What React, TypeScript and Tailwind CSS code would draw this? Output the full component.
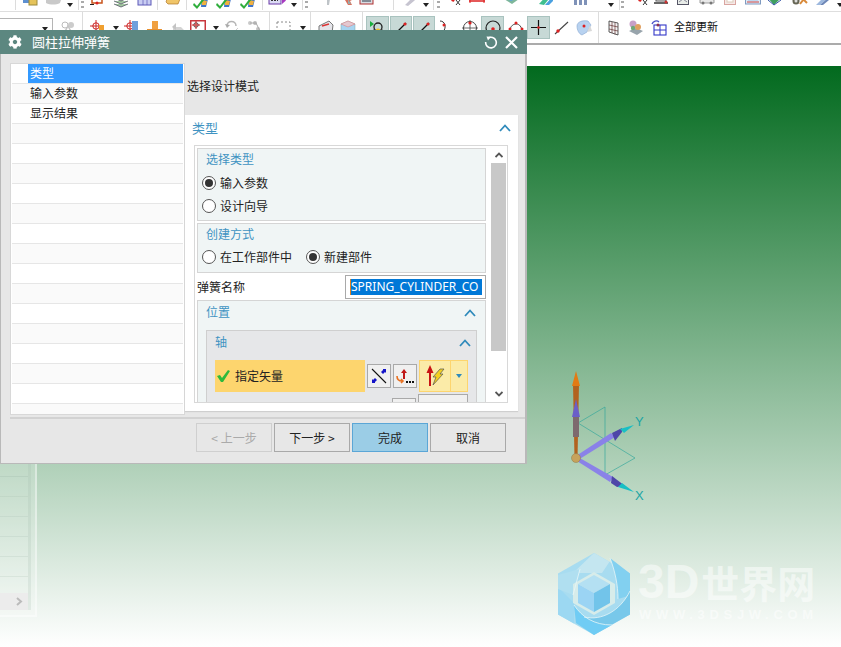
import React from "react";
import { FaCog } from "react-icons/fa";

type P = { ml: string; w?: number; children?: React.ReactNode };
const I = ({ ml, w = 16, children }: P) => (
  <svg className={"shrink-0 " + ml} width={w} height={16} viewBox={`0 0 ${w} 16`}>
    {children}
  </svg>
);
const Dd = ({ ml }: { ml: string }) => (
  <svg className={"shrink-0 " + ml} width={7} height={4} viewBox="0 0 7 4">
    <path d="M0 0h6L3 4z" fill="#222" />
  </svg>
);
const Sep = ({ ml }: { ml: string }) => <div className={"w-px self-stretch shrink-0 bg-[#dcdcdc] " + ml} />;
const Grip = ({ ml }: { ml: string }) => (
  <svg className={"shrink-0 self-start " + ml} width={3} height={11} viewBox="0 0 3 11">
    <path d="M0 1h3v2H0zM0 6h3v2H0z" fill="#aaa" />
  </svg>
);

const CheckIcon = ({ ml }: { ml: string }) => (
  <I ml={ml}>
    <path d="M9 3l6 2-2 8H8z" fill="#3e74c8" />
    <path d="M9 6l5 1-1 4H9z" fill="#f0b040" />
    <path d="M1 9l3 3 6-8 2 1-8 10-4-4z" fill="#2fae3c" />
  </I>
);
const Cross = () => (
  <g stroke="#c22" strokeWidth="1" fill="none">
    <circle cx="6" cy="6" r="3.2" />
    <path d="M6 0v12M0 6h12" />
  </g>
);
const Pt = ({ dark = false }: { dark?: boolean }) => (
  <svg width={16} height={16} viewBox="0 0 16 16">
    <path d="M3 13L13 3" stroke={dark ? "#111" : "#555"} strokeWidth="1.2" />
    <circle cx="3.5" cy="12.5" r="1.6" fill="#d22" />
    {dark && <circle cx="12" cy="4" r="1.6" fill="#d22" />}
  </svg>
);
const Toggle = ({ ml, w = 22, children }: { ml: string; w?: number; children: React.ReactNode }) => (
  <div
    className={
      "shrink-0 h-[23px] flex items-center justify-center bg-[#c7d9d6] border border-[#a9c3bf] " +
      (w === 23 ? "w-[23px] " : "w-[22px] ") +
      ml
    }
  >
    {children}
  </div>
);

const Row1 = () => (
  <div className="h-[12px] flex items-end overflow-hidden border-b border-[#dedede] pb-px bg-white">
    <Sep ml="ml-[15px]" />
    <I ml="ml-[6px]"><rect x="1" y="0" width="11" height="9" fill="#5d8fd0" /><rect x="7" y="3" width="8" height="8" fill="#e5c35a" stroke="#9b8a3c" /></I>
    <I ml="ml-[7px]" w={18}><path d="M1 6c3-6 12-7 16-3l-2 6c-4 2-10 2-14 0z" fill="#c9c9c9" /></I>
    <Dd ml="ml-[4px] mb-[3px]" />
    <Sep ml="ml-[4px]" />
    <Grip ml="ml-[2px]" />
    <I ml="ml-[6px]"><rect x="2" y="1" width="10" height="8" fill="none" stroke="#c9541c" strokeWidth="1.5" /><path d="M0 10h4v1H0zM12 2h4v1h-4z" fill="#222" /><circle cx="7" cy="9" r="1.5" fill="#d22" /></I>
    <I ml="ml-[7px]"><path d="M1 4l7-3 7 3-7 3zM1 7l7 3 7-3M1 10l7 3 7-3" fill="#a3c9a0" stroke="#556" strokeWidth=".8" /></I>
    <I ml="ml-[8px]"><rect x="1" y="1" width="13" height="10" fill="#c9cdf2" stroke="#5c59b8" /><path d="M1 5h13M6 1v10M10 1v10" stroke="#5c59b8" strokeWidth=".7" /></I>
    <Sep ml="ml-[4px]" />
    <I ml="ml-[7px]"><path d="M1 8l2-6 9-1 3 4-2 5H3z" fill="#f0c568" stroke="#b0772a" strokeWidth=".7" /></I>
    <Sep ml="ml-[5px]" />
    <CheckIcon ml="ml-[6px]" />
    <CheckIcon ml="ml-[7px]" />
    <CheckIcon ml="ml-[8px]" />
    <Sep ml="ml-[6px]" />
    <I ml="ml-[5px]" w={18}><rect x="1" y="3" width="12" height="7" fill="#dcdcf4" stroke="#6a3aa8" /><path d="M3 6h7" stroke="#333" strokeDasharray="2 1" strokeWidth="2" /><path d="M14 3l4 3.5-4 3.500z" fill="#a83ac0" /></I>
    <Dd ml="ml-[5px] mb-[3px]" />
    <Sep ml="ml-[4px]" />
    <Grip ml="ml-[2px]" />
    <I ml="ml-[12px]"><path d="M3 0h11l-4 5-1 6H7V5z" fill="#bfc4c8" /></I>
    <I ml="ml-[3px]"><path d="M2 0l7 4 5-3 1 4-4 2 2 4H9L6 6z" fill="#d8705c" /><path d="M9 5l3 5H9z" fill="#9aa" /></I>
    <I ml="ml-[4px]"><rect x="1" y="0" width="13" height="10" fill="#d8dce2" stroke="#b03030" /><path d="M3 4l9-2M3 7h9" stroke="#2c3a48" /></I>
    <Sep ml="ml-[18px]" />
    <I ml="ml-[9px]"><path d="M2 11l6-6 4-5 3 3-4 4-6 5z" fill="#c6c4d0" /><path d="M11 0l4 3-2 2-3-3z" fill="#d9935f" /></I>
    <Dd ml="ml-[4px] mb-[3px]" />
    <Sep ml="ml-[3px]" />
    <Grip ml="ml-[3px]" />
    <I ml="ml-[5px]"><path d="M1 2l8 5" stroke="#b44" strokeWidth="1.5" /><circle cx="2" cy="2" r="1.600" fill="#d22" /><circle cx="8" cy="6" r="1.600" fill="#d22" /><path d="M11 6l4 5M15 6l-4 5" stroke="#333" /></I>
    <I ml="ml-[8px]"><path d="M0 7h16" stroke="#d22" strokeWidth="1.500" /><path d="M1 5v4M15 5v4" stroke="#d22" /><path d="M2 0h12v3H2z" fill="#eee" stroke="#333" strokeWidth=".7" /></I>
    <I ml="ml-[18px]" w={17}><path d="M1 5l7-4 8 4-7 5z" fill="#7eb79b" /><path d="M4 3l4 3 4-3" stroke="#d48a4a" fill="none" /><circle cx="8" cy="5" r="2" fill="#5fa5d8" /></I>
    <I ml="ml-[18px]"><path d="M1 10L10 0h5L6 11z" fill="#3fbf8e" /><path d="M7 11l8-9v5l-4 4z" fill="#4aa0e0" /></I>
    <I ml="ml-[19px]"><path d="M1 11V4l4-4 2 3 2-3 5 4v7h-3V6H9v5H6V6H4v5z" fill="#7f92b8" /></I>
    <Dd ml="ml-[19px] mb-[3px]" />
    <Sep ml="ml-[4px]" />
    <Grip ml="ml-px" />
    <I ml="ml-[8px]"><path d="M1 2l8 5" stroke="#b44" strokeWidth="1.500" /><circle cx="2" cy="2" r="1.600" fill="#d22" /><circle cx="8" cy="6" r="1.600" fill="#d22" /><path d="M11 6l4 5M15 6l-4 5" stroke="#333" /></I>
    <I ml="ml-[5px]"><path d="M1 9h14" stroke="#333" strokeWidth="1.500" /><rect x="3" y="0" width="10" height="7" fill="#f4f4f4" stroke="#555" /><circle cx="13" cy="8" r="1.500" fill="#c33" /></I>
    <I ml="ml-[8px]" w={12}><rect x="0.500" y="0" width="11" height="10.500" fill="#e8ece8" stroke="#556" /><path d="M2 8l8-6M2 2l8 6" stroke="#889" /></I>
    <I ml="ml-[10px]"><path d="M1 9V6l4-3h6l4 3v3z" fill="#e8e8e8" stroke="#888" strokeWidth=".8" /><circle cx="4" cy="9" r="1.500" fill="#777" /><circle cx="12" cy="9" r="1.500" fill="#777" /></I>
    <I ml="ml-[9px]" w={12}><rect x=".5" y="0" width="11" height="10.500" fill="#f5e9e7" stroke="#d9a5a0" /><rect x="3" y="2" width="6" height="6" fill="#fff" stroke="#dcb" /></I>
    <I ml="ml-[9px]"><rect x=".5" y="0" width="15" height="10" fill="#dfeaf5" stroke="#7f9ac0" /><path d="M2 8h12" stroke="#c44" /><rect x="3" y="1.500" width="10" height="5" fill="#9cc3e8" /></I>
    <I ml="ml-[6px]" w={15}><path d="M1 4l6-4 7 4-7 7z" fill="#3f9f5f" /><path d="M4 3l3-2 3 2-3 3z" fill="#d8a22c" /><path d="M1 6l6 5 7-5" stroke="#3a58a8" fill="none" /></I>
    <I ml="ml-[10px]"><circle cx="4" cy="7" r="3.500" fill="#665" /><circle cx="4" cy="7" r="1.500" fill="#ddd" /><path d="M8 2l7 7M15 1L8 10" stroke="#d98a3a" strokeWidth="2" /><circle cx="13" cy="3" r="1.500" fill="#d33" /></I>
    <I ml="ml-[7px]" w={15}><path d="M1 11L11 1l3 2L5 11z" fill="#9db8de" /><path d="M5 11L14 3v3l-6 5z" fill="#6d87b8" /></I>
    <Dd ml="ml-[7px] mb-[3px]" />
  </div>
);

const Row2 = () => (
  <div className="h-[31px] flex items-center bg-white border-b-2 border-[#ababab] box-content">
    <div className="w-[53px] h-[31px] shrink-0 pt-[6px]">
      <div className="h-[25px] border-t border-r border-[#b5b5b5] flex justify-end pr-[3px] pt-[8px]">
        <Dd ml="" />
      </div>
    </div>
    <I ml="ml-[7px]"><circle cx="5" cy="5" r="3" fill="none" stroke="#bbb" /><circle cx="11" cy="5" r="3" fill="#ccc" /><path d="M3 15l5-9 5 9" fill="none" stroke="#c4c4c4" strokeWidth="1.500" /></I>
    <Sep ml="ml-[6px]" />
    <I ml="ml-[7px]"><Cross /><rect x="9" y="5" width="5" height="8" fill="#f0a030" /><rect x="3" y="11" width="12" height="4" fill="#4a7fd0" /></I>
    <Dd ml="ml-[7px]" />
    <I ml="ml-[4px]"><Cross /><rect x="8" y="1" width="6" height="10" fill="#6fa0dc" /><rect x="2" y="10" width="14" height="4" fill="#5f90d0" /></I>
    <I ml="ml-[6px]"><rect x="6" y="1" width="6" height="9" fill="#f0a040" /><rect x="1" y="9" width="15" height="5" fill="#e89030" /></I>
    <I ml="ml-[8px]"><path d="M3 7h8l3 3v4h-4v-3H3z" fill="#d4d4d4" /><path d="M6 3L2 7l4 3" fill="#c4c4c4" /></I>
    <I ml="ml-[4px]"><rect x=".75" y=".75" width="14.500" height="14.500" fill="#fff" stroke="#c8373d" strokeWidth="1.500" /><g transform="translate(2 1)"><circle cx="4" cy="4" r="2.200" fill="none" stroke="#444" /><path d="M4 0v8M0 4h8" stroke="#c22" /></g><rect x="8" y="10" width="6" height="4" fill="#f0a030" /></I>
    <Dd ml="ml-[7px]" />
    <I ml="ml-[4px]"><path d="M3 6c0-6 9-6 9 0" fill="none" stroke="#b5b5b5" strokeWidth="1.500" /><path d="M1 4l2 4 3-3z" fill="#aaa" /><path d="M9 13l5-5" stroke="#ccc" /></I>
    <I ml="ml-[7px]"><circle cx="3" cy="3" r="2" fill="#c9c9c9" /><circle cx="8" cy="3" r="2" fill="#bbb" /><circle cx="11" cy="9" r="2" fill="#c4c4c4" /><path d="M3 3h6l3 6 2 4" stroke="#aaa" fill="none" /></I>
    <Sep ml="ml-[6px]" />
    <I ml="ml-[6px]" w={15}><rect x="1" y="2" width="13" height="12" fill="none" stroke="#8a8a8a" strokeDasharray="2 2" /></I>
    <Dd ml="ml-[9px]" />
    <Sep ml="ml-[3px]" />
    <I ml="ml-[6px]" w={17}><path d="M2 6l10-5 4 4-1 8-10 2-3-5z" fill="#e5e5ea" stroke="#777" /><path d="M5 6l7-2" stroke="#d33" strokeWidth="1.500" /></I>
    <I ml="ml-[6px]"><path d="M1 4l7-3 7 3v9l-7 3-7-3z" fill="#a8d4f0" stroke="#7aa" strokeWidth=".5" /><path d="M1 4l7 3 7-3-7-3z" fill="#e4c8d0" stroke="#d77" strokeWidth=".5" /></I>
    <Sep ml="ml-[6px]" />
    <Toggle ml="ml-[3px]" w={23}><svg width={18} height={16} viewBox="0 0 18 16"><path d="M1 1l4 3-4 3z" fill="#18b03c" /><circle cx="9" cy="7" r="4" fill="none" stroke="#222" strokeWidth="1.300" /><circle cx="9" cy="11" r="2.500" fill="#f0c020" /><circle cx="5" cy="12" r="2" fill="none" stroke="#222" /><circle cx="13" cy="12" r="2" fill="none" stroke="#222" /></svg></Toggle>
    <Toggle ml="ml-px"><Pt dark /></Toggle>
    <Toggle ml="ml-px"><Pt dark /></Toggle>
    <I ml="ml-[4px]" w={10}><path d="M1 1c5 0 7 6 3 11" fill="none" stroke="#333" /><circle cx="5" cy="5" r="1.500" fill="#d22" /></I>
    <I ml="ml-[13px]"><circle cx="8" cy="8" r="6.500" fill="none" stroke="#444" /><path d="M8 0v16M0 8h16" stroke="#444" strokeWidth=".8" /><circle cx="8" cy="3" r="1.600" fill="#d22" /></I>
    <Toggle ml="ml-[3px]" w={23}><svg width={16} height={16} viewBox="0 0 16 16"><circle cx="8" cy="8" r="7" fill="none" stroke="#222" strokeWidth="1.200" /><circle cx="8" cy="9" r="1.800" fill="#d22" /></svg></Toggle>
    <I ml="ml-[4px]"><path d="M2 14C0 2 14 0 14 12" fill="none" stroke="#444" /><circle cx="2" cy="9" r="1.500" fill="#d22" /><circle cx="8" cy="3" r="1.500" fill="#d22" /><circle cx="14" cy="9" r="1.500" fill="#d22" /></I>
    <Toggle ml="ml-[3px]" w={23}><svg width={15} height={15} viewBox="0 0 15 15"><path d="M7.500 0v15M0 7.500h15" stroke="#111" strokeWidth="1.200" /><circle cx="7.500" cy="7.500" r="1.300" fill="#d22" /></svg></Toggle>
    <I ml="ml-[4px]" w={15}><path d="M1 14L14 2" stroke="#444" strokeWidth="1.100" /><circle cx="4" cy="11" r="1.700" fill="#d22" /></I>
    <I ml="ml-[7px]" w={17}><path d="M1 6c0-4 5-6 11-5l3 4-4 7-5 3C3 14 1 10 1 6z" fill="#b8d2f0" stroke="#86a6d0" strokeWidth=".6" /><path d="M11 12l5-1-2-6z" fill="#d9d9d9" /><circle cx="8" cy="6" r="1.500" fill="#d22" /></I>
    <Sep ml="ml-[5px]" />
    <I ml="ml-[9px]" w={11}><path d="M1 1l9 2v12L1 12z" fill="#f4f4f4" stroke="#333" strokeWidth=".8" /><path d="M1 5l9 2M1 9l9 2M4 2v11M7 2.500v12" stroke="#633" strokeWidth=".7" /></I>
    <I ml="ml-[9px]"><path d="M1 11l7-3 7 3-6 4z" fill="#98a4ac" /><circle cx="5" cy="4" r="3.500" fill="#c8a0c8" /><circle cx="10" cy="7" r="3" fill="#e0a060" /><circle cx="5" cy="8" r="2.200" fill="#70a878" /></I>
    <I ml="ml-[7px]"><rect x="3" y="5" width="12" height="10" fill="#fff" stroke="#3438c8" strokeWidth="1.100" /><path d="M3 10h12M9 5v10" stroke="#3438c8" /><path d="M1 4c1-3 5-4 7-2" fill="none" stroke="#4a50c8" strokeWidth="1.300" /><circle cx="7" cy="5" r="1.500" fill="#8a3050" /></I>
    <span className="ml-[7px] -mt-[2px] text-[11px] leading-none text-[#111] font-['Noto_Sans_CJK_SC',sans-serif] whitespace-nowrap">全部更新</span>
  </div>
);

const Up = ({ className = "" }: { className?: string }) => (
  <svg className={className} width={12} height={8} viewBox="0 0 12 8">
    <path d="M1 7l5-5.500L11 7" fill="none" stroke="#2f8abb" strokeWidth="1.800" />
  </svg>
);
const Radio = ({ on = false }: { on?: boolean }) => (
  <span className="shrink-0 w-[14px] h-[14px] rounded-full border border-[#555] bg-white flex items-center justify-center">
    {on && <span className="w-[8px] h-[8px] rounded-full bg-[#333]" />}
  </span>
);
const Opt = ({ on, label, cls = "" }: { on?: boolean; label: string; cls?: string }) => (
  <div className={"flex items-center gap-[5px] text-[#222] " + cls}>
    <Radio on={on} />
    <span className="-ml-px -mt-px">{label}</span>
  </div>
);
const Title = ({ children, cls = "" }: { children: React.ReactNode; cls?: string }) => (
  <div className={"text-[#3f93c2] leading-none " + cls}>{children}</div>
);

const rows = Array.from({ length: 18 });
const listNames = ["类型", "输入参数", "显示结果"];

const Dialog = () => (
  <div className="absolute left-0 top-[30px] w-[527px] h-[434px] flex flex-col bg-[#e7e7e7] border-l border-b border-r-2 border-[#b9b9b9] text-[12px] font-['Noto_Sans_CJK_SC',sans-serif]">
    <div className="h-[24px] shrink-0 bg-[#5c8780] -ml-px -mr-[2px] flex items-center text-white">
      <FaCog className="ml-[8px] w-[14px] h-[14px]" />
      <span className="ml-[10px] text-[13px]">圆柱拉伸弹簧</span>
      <svg className="ml-auto" width={14} height={14} viewBox="0 0 14 14">
        <path d="M4 3.200A5.300 5.300 0 1 1 1.700 7" fill="none" stroke="#fff" strokeWidth="1.600" />
        <path d="M2.500 1.500L7 1.800 4 5.500z" fill="#fff" />
      </svg>
      <svg className="ml-[7px] mr-[9px]" width={13} height={13} viewBox="0 0 13 13">
        <path d="M1 1l11 11M12 1L1 12" stroke="#fff" strokeWidth="2.200" />
      </svg>
    </div>
    <div className="flex items-start pl-[9px] pt-[9px] h-[363px] shrink-0">
      <div className="w-[175px] h-[352px] shrink-0 bg-white border border-[#d8d8d8] overflow-hidden">
        {rows.map((_, i) => (
          <div
            key={i}
            className={
              "h-[20px] border-b border-[#e6e6e6] mx-px flex " + (i % 2 === 0 ? "bg-white" : "bg-[#fafafa]")
            }
          >
            {i < 3 && (
              <div className={"ml-[16px] flex-1 h-[19px] pl-[2px] leading-[17px] " + (i === 0 ? "bg-[#3399ff] text-white" : "text-[#222]")}>
                {listNames[i]}
              </div>
            )}
          </div>
        ))}
      </div>
      <div className="w-[333px] shrink-0">
        <div className="h-[52px] pl-[2px] pt-[14px] text-[#222] leading-[18px]">选择设计模式</div>
        <div className="h-[296px] bg-white flex flex-col pl-[9px] pr-[10px] shadow-[0_1px_1px_#cfcfcf]">
          <div className="h-[30px] shrink-0 flex items-center justify-between -ml-[2px] pb-[4px] text-[13px] text-[#3f93c2]">
            <span>类型</span>
            <Up className="-mr-[3px]" />
          </div>
          <div className="h-[258px] border border-[#d8d8d8] flex overflow-hidden">
            <div className="w-[291px] shrink-0 pl-[2px] pt-[2px] overflow-hidden">
              <div className="h-[73px] bg-[#f0f5f5] border border-[#d5d5d5] pt-[4px]">
                <Title cls="ml-[8px] h-[12px]">选择类型</Title>
                <div className="mt-[11px] ml-[4px] flex flex-col gap-[9px] leading-[14px]">
                  <Opt on label="输入参数" />
                  <Opt label="设计向导" />
                </div>
              </div>
              <div className="mt-[2px] h-[50px] bg-[#f0f5f5] border border-[#d5d5d5] pt-[4px]">
                <Title cls="ml-[8px] h-[12px]">创建方式</Title>
                <div className="mt-[10px] ml-[4px] flex leading-[14px]">
                  <Opt label="在工作部件中" />
                  <Opt on label="新建部件" cls="ml-[14px]" />
                </div>
              </div>
              <div className="h-[27px] flex items-center justify-between text-[#222]">
                <span>弹簧名称</span>
                <div className="w-[141px] h-[24px] border border-[#a9a9a9] bg-white flex items-center pl-[4px] pr-[3px] ml-auto">
                  <span className="h-[16px] w-[132px] bg-[#0078d7] text-white text-[12px] leading-[16px] font-['Noto_Sans',sans-serif] whitespace-nowrap border-l border-[#e08020]">
                    SPRING_CYLINDER_CO
                  </span>
                </div>
              </div>
              <div className="h-[110px] bg-[#f0f5f5] border border-[#d5d5d5] px-[8px] pt-[4px]">
                <div className="flex items-center justify-between h-[13px]">
                  <Title>位置</Title>
                  <Up className="mr-[1px] mt-[2px]" />
                </div>
                <div className="mt-[12px] h-[80px] bg-[#e6e7e9] border border-[#cfcfcf] pl-[8px] pt-[4px]">
                  <div className="flex items-center justify-between h-[13px] pr-[5px]">
                    <Title>轴</Title>
                    <Up className="mt-[2px]" />
                  </div>
                  <div className="mt-[12px] flex items-center">
                    <div className="w-[150px] h-[32px] bg-[#fdd56e] flex items-center pl-[1px] text-[#222]">
                      <svg width={15} height={12} viewBox="0 0 15 12"><path d="M1 6l3-1 2 3 6-8 2 1-7 11H5z" fill="#2dba3c" /></svg>
                      <span className="ml-[4px] -mt-px">指定矢量</span>
                    </div>
                    <div className="ml-[2px] w-[24px] h-[24px] bg-[#f0f0f0] border border-[#a9a9a9] flex items-center justify-center">
                      <svg width={16} height={16} viewBox="0 0 16 16">
                        <path d="M1 1l14 14" stroke="#111" strokeWidth="1.100" />
                        <path d="M12 1h3v4l-1-1-2 2-2-2 2-2zM4 15H1v-4l1 1 2-2 2 2-2 2z" fill="#1414c8" />
                      </svg>
                    </div>
                    <div className="ml-[2px] w-[24px] h-[24px] bg-[#f0f0f0] border border-[#a9a9a9] flex items-center justify-center">
                      <svg width={18} height={18} viewBox="0 0 18 18">
                        <path d="M8 2l3 4H9v6H7V6H5z" fill="#c01818" />
                        <path d="M1 9c0 4 2 5 5 5M5 12l2 2-2 2" fill="none" stroke="#e87020" strokeWidth="1.600" />
                        <path d="M10 14h2v2h-2zM13 14h2v2h-2zM16 14h2v2h-2z" fill="#111" />
                      </svg>
                    </div>
                    <div className="ml-[2px] w-[49px] h-[32px] bg-[#fbeba8] border border-[#fdd56e] flex">
                      <div className="w-[31px] border-r border-[#fdd56e] flex items-center justify-center">
                        <svg width={20} height={24} viewBox="0 0 20 24">
                          <path d="M5 1l3.500 8H6v13H4V9H1.500z" fill="#c81414" />
                          <path d="M15 5h4l-4 5h3L8 21l3-8H8z" fill="#f3d020" stroke="#555" strokeWidth=".7" />
                        </svg>
                      </div>
                      <div className="flex-1 flex items-center justify-center">
                        <svg width={6} height={4} viewBox="0 0 6 4"><path d="M0 0h6L3 4z" fill="#2f8abb" /></svg>
                      </div>
                    </div>
                  </div>
                  <div className="flex justify-end pr-[8px] mt-[2px] gap-[2px] items-start">
                    <div className="mt-[4px] w-[24px] h-[24px] bg-[#f0f0f0] border border-[#a9a9a9]" />
                    <div className="w-[50px] h-[24px] bg-[#f0f0f0] border border-[#a9a9a9]" />
                  </div>
                </div>
              </div>
            </div>
            <div className="w-[16px] ml-[5px] shrink-0 flex flex-col bg-white">
              <div className="h-[17px] shrink-0 flex items-center justify-center">
                <svg width={8} height={6} viewBox="0 0 8 6"><path d="M.5 5L4 1.500 7.500 5" fill="none" stroke="#555" strokeWidth="1.800" /></svg>
              </div>
              <div className="h-[188px] w-[15px] bg-[#c8c8c8]" />
              <div className="flex-1 flex items-end justify-center pb-[5px]">
                <svg width={8} height={6} viewBox="0 0 8 6"><path d="M.5 1L4 4.500 7.500 1" fill="none" stroke="#555" strokeWidth="1.800" /></svg>
              </div>
            </div>
          </div>
        </div>
      </div>
    </div>
    <div className="ml-[9px] h-[2px] bg-[#d2d2d2] shrink-0" />
    <div className="flex pl-[195px] gap-[2px] mt-[4px] text-[#222]">
      <div className="w-[76px] h-[29px] border border-[#cfcfcf] text-[#aaa] flex items-center justify-center">&lt; 上一步</div>
      <div className="w-[76px] h-[29px] border border-[#a9a9a9] flex items-center justify-center">下一步 &gt;</div>
      <div className="w-[76px] h-[29px] border border-[#5ba6d6] bg-[#9bcde6] flex items-center justify-center">完成</div>
      <div className="w-[76px] h-[29px] border border-[#a9a9a9] flex items-center justify-center">取消</div>
    </div>
  </div>
);

const Axes = () => (
  <svg className="absolute left-[550px] top-[360px]" width={110} height={150} viewBox="550 360 110 150">
    <path d="M578 423l27-16v68l30-17-57-35" fill="none" stroke="#2ea69a" strokeWidth=".8" opacity=".8" />
    <path d="M576 456l35-23 4 4-37 23z" fill="#8a82e8" />
    <path d="M612 433l10-5v4l-7 9z" fill="#4e46a8" />
    <path d="M620 429l14-4-10 8z" fill="#19bfc4" />
    <path d="M578 457l35 20-3 5-33-21z" fill="#8a82e8" />
    <path d="M612 476l13 10-8 1-6-4z" fill="#4e46a8" />
    <path d="M622 483l12 9-16-5z" fill="#19bfc4" />
    <path d="M574.500 458h3l1.500-74h-6z" fill="#b2621e" />
    <path d="M576 371l-4 15h8z" fill="#e27b14" />
    <path d="M576 399l-4 18h8z" fill="#6a5fc8" />
    <path d="M573 417h6v20h-6z" fill="#7d6a6e" />
    <circle cx="576" cy="458" r="4.500" fill="#c7a25c" stroke="#8a7a4a" strokeWidth=".5" />
    <text x="635" y="426" fontSize="13" fill="#20a5a5" fontFamily="Liberation Sans, sans-serif">Y</text>
    <text x="635" y="500" fontSize="13" fill="#20a5a5" fontFamily="Liberation Sans, sans-serif">X</text>
  </svg>
);

const Watermark = () => (
  <div className="absolute left-[558px] top-[553px] flex">
    <svg width={73} height={82} viewBox="0 0 73 82">
      <path d="M36 0l36 20.500v41L36 82 0 61.500v-41z" fill="#a8dcf0" />
      <path d="M36 0l36 20.500v0L52 8l-8 12L15 20z" fill="#c4e6f0" />
      <path d="M52 5l20 15.500v22L60 46c0-14-3-28-8-41z" fill="#82d0f0" />
      <path d="M72 38v23.500L46 76c-6-2-14-8-20-12 18 4 36-6 46-26z" fill="#78c8ea" />
      <path d="M16 52l2 18 18 12 18-10C36 72 24 64 16 52z" fill="#70ccf4" />
      <path d="M0 34v27.500l16 9V50z" fill="#9cd8f2" />
      <path d="M0 22l22-6-7 26L0 36z" fill="#b0dff0" />
      <path d="M36 19l21 12v19L36 62 15 50V31z" fill="#d7ecea" />
      <path d="M36 22l16 9-16 9-16-9z" fill="#b4e0f2" />
      <path d="M20 31l16 9v19l-16-9z" fill="#9bd4f4" />
      <path d="M52 31L36 40v19l16-9z" fill="#72c4ea" />
      <path d="M52 5c5 13 8 27 8 41M72 38C62 58 44 68 26 64M54 72C36 72 24 64 16 52M15 42L22 16" fill="none" stroke="#e8f6f8" strokeWidth=".8" />
    </svg>
    <div className="ml-[7px] pt-[5px] text-white/50 font-['Liberation_Sans','Noto_Sans_CJK_SC',sans-serif] font-bold">
      <div className="h-[48px] flex items-baseline whitespace-nowrap leading-[48px]">
        <span className="text-[48px]">3D</span>
        <span className="ml-[2px] text-[38px]">世界网</span>
      </div>
      <div className="mt-[3px] ml-[1px] text-[13px] leading-[12px] tracking-[4.700px] whitespace-nowrap">WWW.3DSJW.COM</div>
    </div>
  </div>
);

export default function App() {
  return (
    <div className="relative w-[841px] h-[647px] overflow-hidden bg-white flex flex-col">
      <Row1 />
      <Row2 />
      <div className="h-[21px] shrink-0 bg-white" />
      <div className="flex-1 bg-linear-to-b/srgb from-[#026a1e] to-[#ffffff]" />
      <div className="absolute left-0 top-[440px] w-[37px] h-[177px] bg-white/20 border-r-2 border-b-2 border-white/40">
        <div className="w-[31px] h-[170px] border-r-[3px] border-b-[3px] border-[#9fb8a8]/20">
          <div className="h-[37px] border-b border-[#9fb8a8]/30" />
          {[0, 1, 2, 3, 4].map((i) => (
            <div key={i} className="h-[20px] border-b border-[#9fb8a8]/20" />
          ))}
          <div className="mt-[16px] h-[17px] bg-[#ececec] flex items-center justify-end pr-[5px]">
            <svg width={7} height={9} viewBox="0 0 7 9"><path d="M1 1l4 3.500L1 8" fill="none" stroke="#bbb" strokeWidth="2" /></svg>
          </div>
        </div>
      </div>
      <Axes />
      <Watermark />
      <Dialog />
    </div>
  );
}
